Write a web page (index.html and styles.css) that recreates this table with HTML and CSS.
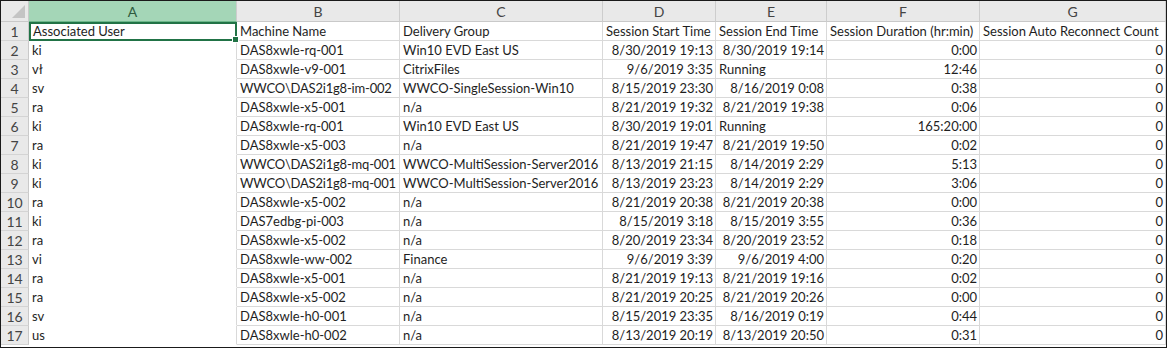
FILE: index.html
```html
<!DOCTYPE html>
<html>
<head>
<meta charset="utf-8">
<link rel="stylesheet" href="styles.css">
</head>
<body>
<div class="sheet">
  <div class="corner"><span class="tri"></span></div>
  <div class="colhdr sel">A</div>
  <div class="colhdr">B</div>
  <div class="colhdr">C</div>
  <div class="colhdr">D</div>
  <div class="colhdr">E</div>
  <div class="colhdr">F</div>
  <div class="colhdr">G</div>

  <div class="rowhdr">1</div>
  <div class="cell a active">Associated User<span class="handle"></span></div>
  <div class="cell">Machine Name</div>
  <div class="cell">Delivery Group</div>
  <div class="cell">Session Start Time</div>
  <div class="cell">Session End Time</div>
  <div class="cell">Session Duration (hr:min)</div>
  <div class="cell">Session Auto Reconnect Count</div>

  <div class="rowhdr">2</div><div class="cell a">ki</div><div class="cell">DAS8xwle-rq-001</div><div class="cell">Win10 EVD East US</div><div class="cell r">8/30/2019 19:13</div><div class="cell r">8/30/2019 19:14</div><div class="cell r">0:00</div><div class="cell r">0</div>
  <div class="rowhdr">3</div><div class="cell a">vł</div><div class="cell">DAS8xwle-v9-001</div><div class="cell">CitrixFiles</div><div class="cell r">9/6/2019 3:35</div><div class="cell">Running</div><div class="cell r">12:46</div><div class="cell r">0</div>
  <div class="rowhdr">4</div><div class="cell a">sv</div><div class="cell t">WWCO\DAS2i1g8-im-002</div><div class="cell">WWCO-SingleSession-Win10</div><div class="cell r">8/15/2019 23:30</div><div class="cell r">8/16/2019 0:08</div><div class="cell r">0:38</div><div class="cell r">0</div>
  <div class="rowhdr">5</div><div class="cell a">ra</div><div class="cell">DAS8xwle-x5-001</div><div class="cell">n/a</div><div class="cell r">8/21/2019 19:32</div><div class="cell r">8/21/2019 19:38</div><div class="cell r">0:06</div><div class="cell r">0</div>
  <div class="rowhdr">6</div><div class="cell a">ki</div><div class="cell">DAS8xwle-rq-001</div><div class="cell">Win10 EVD East US</div><div class="cell r">8/30/2019 19:01</div><div class="cell">Running</div><div class="cell r">165:20:00</div><div class="cell r">0</div>
  <div class="rowhdr">7</div><div class="cell a">ra</div><div class="cell">DAS8xwle-x5-003</div><div class="cell">n/a</div><div class="cell r">8/21/2019 19:47</div><div class="cell r">8/21/2019 19:50</div><div class="cell r">0:02</div><div class="cell r">0</div>
  <div class="rowhdr">8</div><div class="cell a">ki</div><div class="cell t">WWCO\DAS2i1g8-mq-001</div><div class="cell">WWCO-MultiSession-Server2016</div><div class="cell r">8/13/2019 21:15</div><div class="cell r">8/14/2019 2:29</div><div class="cell r">5:13</div><div class="cell r">0</div>
  <div class="rowhdr">9</div><div class="cell a">ki</div><div class="cell t">WWCO\DAS2i1g8-mq-001</div><div class="cell">WWCO-MultiSession-Server2016</div><div class="cell r">8/13/2019 23:23</div><div class="cell r">8/14/2019 2:29</div><div class="cell r">3:06</div><div class="cell r">0</div>
  <div class="rowhdr">10</div><div class="cell a">ra</div><div class="cell">DAS8xwle-x5-002</div><div class="cell">n/a</div><div class="cell r">8/21/2019 20:38</div><div class="cell r">8/21/2019 20:38</div><div class="cell r">0:00</div><div class="cell r">0</div>
  <div class="rowhdr">11</div><div class="cell a">ki</div><div class="cell">DAS7edbg-pi-003</div><div class="cell">n/a</div><div class="cell r">8/15/2019 3:18</div><div class="cell r">8/15/2019 3:55</div><div class="cell r">0:36</div><div class="cell r">0</div>
  <div class="rowhdr">12</div><div class="cell a">ra</div><div class="cell">DAS8xwle-x5-002</div><div class="cell">n/a</div><div class="cell r">8/20/2019 23:34</div><div class="cell r">8/20/2019 23:52</div><div class="cell r">0:18</div><div class="cell r">0</div>
  <div class="rowhdr">13</div><div class="cell a">vi</div><div class="cell">DAS8xwle-ww-002</div><div class="cell">Finance</div><div class="cell r">9/6/2019 3:39</div><div class="cell r">9/6/2019 4:00</div><div class="cell r">0:20</div><div class="cell r">0</div>
  <div class="rowhdr">14</div><div class="cell a">ra</div><div class="cell">DAS8xwle-x5-001</div><div class="cell">n/a</div><div class="cell r">8/21/2019 19:13</div><div class="cell r">8/21/2019 19:16</div><div class="cell r">0:02</div><div class="cell r">0</div>
  <div class="rowhdr">15</div><div class="cell a">ra</div><div class="cell">DAS8xwle-x5-002</div><div class="cell">n/a</div><div class="cell r">8/21/2019 20:25</div><div class="cell r">8/21/2019 20:26</div><div class="cell r">0:00</div><div class="cell r">0</div>
  <div class="rowhdr">16</div><div class="cell a">sv</div><div class="cell">DAS8xwle-h0-001</div><div class="cell">n/a</div><div class="cell r">8/15/2019 23:35</div><div class="cell r">8/16/2019 0:19</div><div class="cell r">0:44</div><div class="cell r">0</div>
  <div class="rowhdr last">17</div><div class="cell a">us</div><div class="cell">DAS8xwle-h0-002</div><div class="cell">n/a</div><div class="cell r">8/13/2019 20:19</div><div class="cell r">8/13/2019 20:50</div><div class="cell r">0:31</div><div class="cell r">0</div>
</div>
</body>
</html>
```
FILE: styles.css
```css
html, body {
  margin: 0;
  padding: 0;
  background: #ffffff;
}
body {
  width: 1167px;
  height: 348px;
  overflow: hidden;
}
.sheet {
  box-sizing: border-box;
  width: 1167px;
  height: 348px;
  border: 1px solid #1a1a1a;
  display: grid;
  grid-template-columns: 28px 208px 163px 203px 113px 111px 153px 186px;
  grid-template-rows: 21px repeat(17, 19px);
  font-family: "Lato", "Liberation Sans", sans-serif;
  font-size: 13px;
  color: #1e1e1e;
  background: #fff;
}
.corner {
  background: #e9e9e9;
  border-right: 1px solid #c9c9c9;
  border-bottom: 1px solid #c9c9c9;
  position: relative;
}
.tri {
  position: absolute;
  right: 3px;
  bottom: 3px;
  width: 0;
  height: 0;
  border-left: 13px solid transparent;
  border-bottom: 13px solid #c4c4c4;
}
.colhdr {
  box-sizing: border-box;
  background: #e9e9e9;
  border-right: 1px solid #cdcdcd;
  border-bottom: 1px solid #c9c9c9;
  text-align: center;
  line-height: 21px;
  color: #444;
  font-size: 14px;
}
.colhdr.sel {
  background: #a4d6b7;
  border-bottom: 1px solid #6cb88a;
  color: #2f5a3f;
}
.rowhdr {
  box-sizing: border-box;
  background: #e9e9e9;
  border-right: 1px solid #c9c9c9;
  border-bottom: 1px solid #d4d4d4;
  text-align: center;
  line-height: 19px;
  color: #444;
  font-size: 14px;
}
.cell {
  box-sizing: border-box;
  border-right: 1px solid #d9d9d9;
  border-bottom: 1px solid #d9d9d9;
  padding: 0 2px 0 3px;
  line-height: 19px;
  white-space: nowrap;
  overflow: hidden;
}
.cell.t {
  letter-spacing: -0.2px;
}
.cell.r {
  text-align: right;
}
.cell.a {
  border-bottom-color: transparent;
}
.cell.active {
  border: 2px solid #217346;
  padding: 0 2px;
  line-height: 15px;
  overflow: visible;
  position: relative;
}
.handle {
  position: absolute;
  right: -4px;
  bottom: -4px;
  width: 5px;
  height: 5px;
  background: #217346;
  border: 1px solid #fff;
}
```
